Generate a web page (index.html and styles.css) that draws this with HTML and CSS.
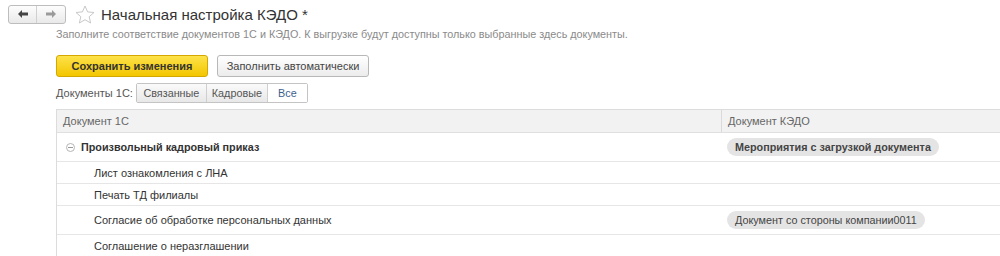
FILE: index.html
```html
<!DOCTYPE html>
<html lang="ru">
<head>
<meta charset="UTF-8">
<title>Начальная настройка КЭДО</title>
<link rel="stylesheet" href="styles.css">
</head>
<body>

<!-- Заголовок формы -->
<div class="topbar">
    <div class="nav">
        <button class="nav-btn back">
            <svg width="12" height="10" viewBox="0 0 12 10"><path d="M1 5 L5 1 L5 3.5 L11 3.5 L11 6.5 L5 6.5 L5 9 Z" fill="#444"/></svg>
        </button>
        <button class="nav-btn fwd">
            <svg width="12" height="10" viewBox="0 0 12 10"><path d="M11 5 L7 1 L7 3.5 L1 3.5 L1 6.5 L7 6.5 L7 9 Z" fill="#9a9a9a"/></svg>
        </button>
    </div>
    <svg class="star" width="20" height="19" viewBox="0 0 20 19"><path d="M10 1 L12.6 6.9 L19 7.5 L14.2 11.7 L15.6 18 L10 14.7 L4.4 18 L5.8 11.7 L1 7.5 L7.4 6.9 Z" fill="none" stroke="#c8c8c8" stroke-width="1"/></svg>
    <h1 class="title">Начальная настройка КЭДО *</h1>
</div>

<div class="content">
    <p class="hint">Заполните соответствие документов 1С и КЭДО. К выгрузке будут доступны только выбранные здесь документы.</p>

    <div class="actions">
        <button class="btn btn-primary">Сохранить изменения</button>
        <button class="btn">Заполнить автоматически</button>
    </div>

    <div class="filter">
        <span class="filter-label">Документы 1С:</span>
        <div class="tabs">
            <button class="tab">Связанные</button>
            <button class="tab">Кадровые</button>
            <button class="tab active">Все</button>
        </div>
    </div>

    <!-- Таблица соответствия -->
    <div class="grid">
        <div class="row head">
            <div class="cell c1">Документ 1С</div>
            <div class="cell c2">Документ КЭДО</div>
        </div>
        <div class="row group">
            <div class="cell c1"><span class="toggle"></span><b>Произвольный кадровый приказ</b></div>
            <div class="cell c2"><span class="pill bold">Мероприятия с загрузкой документа</span></div>
        </div>
        <div class="row">
            <div class="cell c1 child">Лист ознакомления с ЛНА</div>
            <div class="cell c2"></div>
        </div>
        <div class="row">
            <div class="cell c1 child">Печать ТД филиалы</div>
            <div class="cell c2"></div>
        </div>
        <div class="row tall">
            <div class="cell c1 child">Согласие об обработке персональных данных</div>
            <div class="cell c2"><span class="pill">Документ со стороны компании0011</span></div>
        </div>
        <div class="row">
            <div class="cell c1 child">Соглашение о неразглашении</div>
            <div class="cell c2"></div>
        </div>
    </div>
</div>

</body>
</html>
```

FILE: styles.css
```css
/* Общие */
html, body {
    margin: 0;
    padding: 0;
    height: 100%;
    overflow: hidden;
    background: #fff;
    color: #333;
    font-family: "Liberation Sans", Arial, sans-serif;
    font-size: 11px;
}

button {
    font-family: inherit;
    font-size: 11px;
    cursor: pointer;
}

/* Шапка формы */
.topbar {
    display: flex;
    align-items: center;
    height: 28px;
    padding: 0 8px;
}

.nav {
    display: flex;
    height: 17px;
    border: 1px solid #bdbdbd;
    border-radius: 3px;
    background: linear-gradient(#fdfdfd, #e9e9e9);
}

.nav-btn {
    width: 28px;
    height: 17px;
    padding: 0;
    border: 0;
    background: none;
    display: flex;
    align-items: center;
    justify-content: center;
}

.nav-btn.back {
    border-right: 1px solid #d0d0d0;
}

.star {
    margin-left: 9px;
}

.title {
    margin: 0 0 0 6px;
    font-size: 15px;
    font-weight: normal;
    color: #333;
    white-space: nowrap;
}

/* Содержимое */
.content {
    padding-left: 56px;
}

.hint {
    margin: 0;
    color: #8a8a8a;
    font-size: 10.8px;
    line-height: 12px;
}

.actions {
    display: flex;
    gap: 9px;
    margin-top: 15px;
}

.btn {
    height: 22px;
    width: 152px;
    padding: 0;
    white-space: nowrap;
    border: 1px solid #b8b8b8;
    border-radius: 3px;
    background: linear-gradient(#ffffff, #ececec);
    color: #444;
}

.btn-primary {
    background: linear-gradient(#fde24a, #f3c600);
    border-color: #d4a800;
    color: #333;
    font-weight: bold;
}

.filter {
    display: flex;
    align-items: center;
    margin-top: 6px;
}

.filter-label {
    color: #555;
    margin-right: 3px;
}

.tabs {
    display: flex;
    border: 1px solid #c4c4c4;
    border-radius: 2px;
}

.tab {
    height: 18px;
    padding: 0;
    border: 0;
    border-right: 1px solid #cfcfcf;
    background: linear-gradient(#fafafa, #e8e8e8);
    color: #555;
    font-size: 10.8px;
}

.tab:nth-child(1) {
    width: 70px;
}

.tab:nth-child(2) {
    width: 61px;
}

.tab.active {
    width: 39px;
    border-right: 0;
    background: #fff;
    color: #3d5f8e;
}

/* Таблица */
.grid {
    margin-top: 6px;
    border-top: 1px solid #dcdcdc;
    border-left: 1px solid #dcdcdc;
}

.row {
    display: grid;
    grid-template-columns: 664px 1fr;
    height: 21px;
    border-bottom: 1px solid #e6e6e6;
    align-items: center;
}

.row.head {
    height: 22px;
    background: #f2f2f2;
    border-bottom-color: #e0e0e0;
    color: #666;
}

.row.head .c2 {
    border-left: 1px solid #dadada;
    height: 100%;
}

.row.group,
.row.tall {
    height: 28px;
}

.cell {
    display: flex;
    align-items: center;
    padding-left: 6px;
    white-space: nowrap;
}

.cell.child {
    padding-left: 37px;
}

.group .c1 b {
    color: #333;
    font-size: 10.8px;
}

.toggle {
    width: 7px;
    height: 7px;
    border: 1px solid #b5b5b5;
    border-radius: 50%;
    margin: 0 6px 0 3px;
    position: relative;
}

.toggle::after {
    content: "";
    position: absolute;
    left: 1px;
    right: 1px;
    top: 3px;
    height: 1px;
    background: #999;
}

.pill {
    display: inline-block;
    background: #e4e4e4;
    border-radius: 9px;
    padding: 3px 8px;
    color: #444;
    font-size: 10.8px;
}

.pill.bold {
    font-weight: bold;
}
```
